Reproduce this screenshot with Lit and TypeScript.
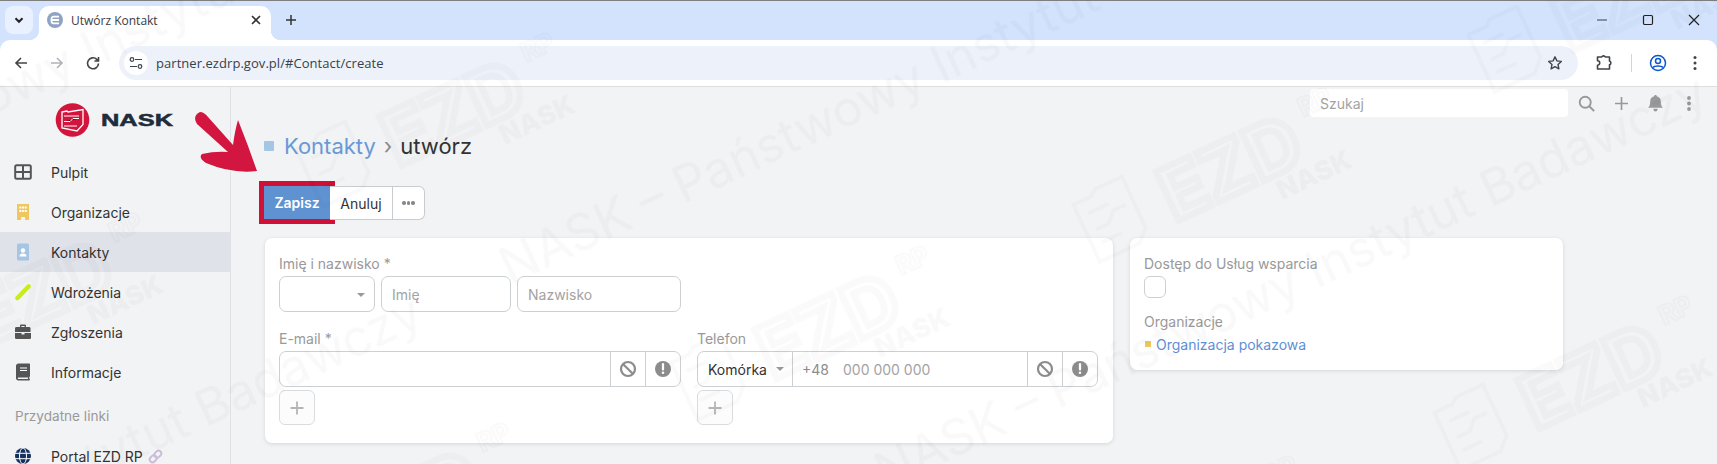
import { LitElement, html, css, svg } from "lit";
import { customElement } from "lit/decorators.js";

const WM_TEXTS = [
  { x: 510, y: 285 },
  { x: 885, y: 490 },
  { x: -340, y: 270 },
  { x: -400, y: 710 },
];
const WM_LOGOS = [
  { x: 41, y: 292 },
  { x: 453, y: 112 },
  { x: 828, y: 325 },
  { x: 1230, y: 167 },
  { x: 1591, y: 375 },
  { x: 1625, y: -3 },
  { x: 409, y: 502 },
  { x: 1196, y: 535 },
];

const icons = {
  grid: svg`<svg viewBox="0 0 18 18" width="18" height="18"><rect x="1.200" y="2.200" width="15.600" height="13.600" rx="1.500" fill="none" stroke="#555" stroke-width="2"/><path d="M9 2v14M1 9h16" stroke="#555" stroke-width="2"/></svg>`,
  building: svg`<svg viewBox="0 0 18 18" width="18" height="18"><path d="M3 1h12v16h-4v-3H7v3H3z" fill="#f0c75e"/><g fill="#fff"><rect x="5.300" y="3.500" width="2" height="2"/><rect x="8" y="3.500" width="2" height="2"/><rect x="10.700" y="3.500" width="2" height="2"/><rect x="5.300" y="7" width="2" height="2"/><rect x="8" y="7" width="2" height="2"/><rect x="10.700" y="7" width="2" height="2"/></g></svg>`,
  contact: svg`<svg viewBox="0 0 18 18" width="18" height="18"><rect x="3" y="0.500" width="12" height="17" rx="1.500" fill="#a4c6e4"/><circle cx="9" cy="7.500" r="2.200" fill="#fff"/><path d="M5.500 13.500c0-2.200 1.500-3 3.500-3s3.500.8 3.500 3z" fill="#fff"/></svg>`,
  pencil: svg`<svg viewBox="0 0 18 18" width="18" height="18"><path d="M3.500 15L14.500 3.500" stroke="#c6ee1a" stroke-width="4.500" stroke-linecap="round"/></svg>`,
  case: svg`<svg viewBox="0 0 18 18" width="18" height="18"><path d="M6 4V2.800C6 2 6.600 1.500 7.300 1.500h3.400c.7 0 1.300.5 1.300 1.300V4h3c1 0 1.500.6 1.500 1.500V9H1V5.500C1 4.600 1.500 4 2.500 4zm1.400 0h3.200V3H7.400z" fill="#555" fill-rule="evenodd"/><path d="M1 10h6.500v1.500h3V10H17v4.500c0 1-.6 1.500-1.500 1.500h-13C1.600 16 1 15.500 1 14.500z" fill="#555"/></svg>`,
  book: svg`<svg viewBox="0 0 18 18" width="18" height="18"><path d="M4.500.5H15c.6 0 1 .4 1 1V13c0 .4-.3.800-.7.900v1.900c.4.100.7.400.7.700 0 .5-.4.900-.9.900H4.500C3 17.500 2 16.500 2 15V3C2 1.500 3 .5 4.500.5zm.2 13.900c-.5 0-1 .3-1 .8s.5.800 1 .8H14v-1.600z" fill="#555" fill-rule="evenodd"/><path d="M6 5h7M6 7.500h7" stroke="#fff" stroke-width="1.200"/></svg>`,
  globe: svg`<svg viewBox="0 0 18 18" width="18" height="18"><circle cx="9" cy="9" r="8" fill="#14305e"/><ellipse cx="9" cy="9" rx="3.500" ry="8" fill="none" stroke="#fff" stroke-width="1"/><path d="M1 6.300h16M1 11.700h16" stroke="#fff" stroke-width="1"/></svg>`,
  link: svg`<svg viewBox="0 0 16 16" width="15" height="15"><g fill="none" stroke="#c9bcd6" stroke-width="2" transform="rotate(-45 8 8)"><rect x="0.500" y="5" width="8" height="6" rx="3"/><rect x="7.500" y="5" width="8" height="6" rx="3"/></g></svg>`,
  ban: svg`<svg viewBox="0 0 18 18" width="18" height="18"><circle cx="9" cy="9" r="7" fill="none" stroke="#8c8c8c" stroke-width="2.200"/><path d="M4.200 4.200l9.600 9.600" stroke="#8c8c8c" stroke-width="2.200"/></svg>`,
  warn: svg`<svg viewBox="0 0 18 18" width="18" height="18"><circle cx="9" cy="9" r="8" fill="#8c8c8c"/><path d="M9 4.200v5.300" stroke="#fff" stroke-width="2.200" stroke-linecap="round"/><circle cx="9" cy="12.800" r="1.300" fill="#fff"/></svg>`,
  plus: svg`<svg viewBox="0 0 14 14" width="14" height="14"><path d="M7 .5v13M.5 7h13" stroke="#b5b5b5" stroke-width="1.800"/></svg>`,
};

@customElement("app-root")
export class AppRoot extends LitElement {
  static styles = css`
    :host { display: block; position: relative; width: 1717px; height: 464px; overflow: hidden; background: #f2f3f5; font-family: Inter, "Noto Sans", sans-serif; font-size: 14px; color: #333; }
    * { box-sizing: border-box; }
    svg { display: block; }

    .browser { height: 87px; background: #d3e3fd; border-top: 1px solid #7f7f7f; display: flex; flex-direction: column; font-family: "Open Sans", sans-serif; }
    .strip { height: 39px; display: flex; align-items: flex-start; padding: 5px 0 0 5px; }
    .tab-list { width: 28px; height: 28px; border-radius: 8px; background: #e9f1fe; display: flex; align-items: center; justify-content: center; }
    .tab { position: relative; margin-left: 6px; width: 232px; height: 34px; background: #fff; border-radius: 10px 10px 0 0; display: flex; align-items: center; padding: 0 9px 6px 8px; font-size: 12px; color: #3c3c3c; }
    .tab::before, .tab::after { content: ""; position: absolute; bottom: 0; width: 10px; height: 10px; }
    .tab::before { left: -10px; background: radial-gradient(circle at 0 0, transparent 10px, #fff 10.500px); }
    .tab::after { right: -10px; background: radial-gradient(circle at 100% 0, transparent 10px, #fff 10.500px); }
    .tab-title { margin-left: 8px; flex: 1; }
    .new-tab { margin: 8px 0 0 14px; }
    .winctl { margin-left: auto; display: flex; gap: 30px; padding: 6px 15px 0 0; }
    .winctl svg { width: 16px; height: 16px; }
    .toolbar { flex: 1; background: #fff; border-radius: 10px 10px 0 0; border-bottom: 1px solid #dcdee0; display: flex; align-items: center; padding: 0 14px 0 12px; }
    .nav { display: flex; gap: 18px; margin-right: 17px; }
    .omni { width: 1459px; height: 34px; border-radius: 17px; background: #edf2fa; display: flex; align-items: center; padding: 0 15px 0 5px; font-size: 13px; color: #37414e; }
    .chip { width: 24px; height: 24px; border-radius: 50%; background: #fff; display: flex; align-items: center; justify-content: center; margin-right: 8px; }
    .url { flex: 1; letter-spacing: .05px; }
    .tools { display: flex; align-items: center; margin-left: 17px; }
    .divider { width: 1px; height: 18px; background: #c4d7f5; margin: 0 17px 0 18px; }
    .dots { margin-left: 26px; }

    .page { display: flex; height: 377px; }
    .side { width: 231px; flex: none; border-right: 1px solid #dfe1e4; }
    .logo { height: 65px; display: flex; align-items: flex-start; padding: 16px 0 0 55px; }
    .item { height: 40px; display: flex; align-items: center; padding-left: 14px; gap: 19px; color: #333; }
    .item.active { background: #dfe2e9; }
    .ico { width: 18px; flex: none; }
    .side-label { height: 40px; margin-top: 4px; display: flex; align-items: center; padding-left: 15px; color: #999; font-size: 13.600px; }
    .ext { margin-left: -14px; }

    main { flex: 1; padding: 0 0 0 34px; min-width: 0; }
    .top { height: 32px; display: flex; align-items: center; justify-content: flex-end; padding-right: 26px; }
    .search { width: 258px; height: 28px; background: #fff; border: 0; border-radius: 4px; padding: 0 10px; font: 14px Inter, sans-serif; color: #333; outline: none; }
    .search::placeholder, .field::placeholder { color: #a3a3a3; opacity: 1; }
    .top-icons { display: flex; align-items: center; gap: 20px; margin-left: 10px; }
    .top-dots { margin-left: 4px; }
    .title { margin: 12px 0 0 -1px; height: 30px; display: flex; align-items: center; font-size: 22px; }
    .sq { width: 10px; height: 10px; background: #a4c6e4; margin-right: 10px; border-radius: 1px; }
    .title a { color: #6a9ad6; }
    .sep { color: #8a8a8a; margin: 0 8px; }
    .actions { display: flex; align-items: flex-start; margin: 25px 0 0 -1px; height: 34px; }
    .btn { height: 34px; background: #fff; border: 1px solid #c9cccf; border-left: 0; display: flex; align-items: center; justify-content: center; color: #333; }
    .save { width: 66px; height: 33px; border: 0; background: #5f92d1; color: #fff; font-weight: 600; outline: 5px solid #cf1037; }
    .cancel { width: 63px; }
    .more { width: 32px; border-radius: 0 6px 6px 0; gap: 1.200px; }
    .more i { width: 3.500px; height: 3.500px; border-radius: 50%; background: #888; }

    .cards { display: flex; gap: 17px; align-items: flex-start; margin-top: 18px; }
    .card { background: #fff; border-radius: 7px; box-shadow: 0 1px 4px rgba(0,0,0,.12); padding: 15px 14px 18px; }
    .c1 { width: 848px; height: 205px; }
    .c2 { width: 433px; height: 132px; }
    .label { height: 20px; line-height: 22px; color: #999; margin-bottom: 3px; }
    .row { display: flex; gap: 6px; height: 36px; }
    .grid { display: grid; grid-template-columns: 402px 401px; column-gap: 16px; margin-top: 16px; }
    .box { height: 36px; border: 1px solid #ccd0d2; border-radius: 7px; background: #fff; position: relative; }
    .select { width: 96px; }
    .caret { width: 0; height: 0; border: 4px solid transparent; border-top: 4.500px solid #999; border-bottom: 0; }
    .select .caret { position: absolute; right: 9px; top: 16px; }
    .field { height: 36px; border: 1px solid #ccd0d2; border-radius: 7px; padding: 0 10px; font: 14px Inter, sans-serif; color: #333; outline: none; background: #fff; }
    .imie { width: 130px; }
    .nazw { width: 164px; }
    .group { display: flex; align-items: stretch; }
    .grow { flex: 1; min-width: 0; }
    .cell { width: 35px; border-left: 1px solid #ccd0d2; display: flex; align-items: center; justify-content: center; }
    .type { width: 95px; padding-left: 10px; display: flex; align-items: center; gap: 9px; color: #333; border-right: 1px solid #ccd0d2; }
    .phone { flex: 1; display: flex; align-items: center; padding-left: 9px; color: #a3a3a3; }
    .phone .pre { color: #8c8c8c; margin-right: 14px; }
    .add { width: 36px; height: 35px; margin-top: 3px; border: 1px solid #d9dcde; border-radius: 6px; background: #fcfcfc; display: flex; align-items: center; justify-content: center; }
    .check { width: 22px; height: 22px; border: 1px solid #ccd0d2; border-radius: 6px; margin-bottom: 13px; }
    .org { display: flex; align-items: center; color: #5f8fd4; height: 20px; margin-top: 2px; }
    .org i { width: 6px; height: 6px; background: #f0c75e; margin: 0 5px 0 1px; }

    .overlay { position: absolute; left: 0; top: 0; pointer-events: none; }
    .wm { filter: blur(.7px); }
    .wm-text { font: 50px Inter, sans-serif; fill: rgba(0,0,0,.022); stroke: rgba(0,0,0,.01); stroke-width: 1px; }
    .wm-ezd { font: 700 74px Inter, sans-serif; fill: none; stroke: rgba(0,0,0,.018); stroke-width: 7px; }
    .wm-rp { font: 700 26px Inter, sans-serif; fill: none; stroke: rgba(0,0,0,.018); stroke-width: 2.500px; }
    .wm-nask { font: 900 27px Inter, sans-serif; fill: rgba(0,0,0,.025); }
    .wm-doc { fill: none; stroke: rgba(0,0,0,.018); stroke-width: 4px; }
    .nask-word { font: 900 16px "Liberation Sans", sans-serif; fill: #1f2d3a; stroke: #1f2d3a; stroke-width: .5px; }
  `;

  private renderWatermark() {
    return svg`<g class="wm">
      ${WM_TEXTS.map((t) => svg`<text class="wm-text" transform="translate(${t.x} ${t.y}) rotate(-25)">NASK – Państwowy Instytut Badawczy</text>`)}
      ${WM_LOGOS.map((l) => svg`<g transform="translate(${l.x} ${l.y}) rotate(-25)">
        <text class="wm-ezd" text-anchor="middle" y="27">EZD</text>
        <text class="wm-rp" text-anchor="middle" x="104" y="-14">RP</text>
        <text class="wm-nask" text-anchor="middle" x="73" y="52">NASK</text>
        <path class="wm-doc" d="M-158 -32h20l6 -5h30v56l-12 12h-44zM-148 -18h22M-148 0h14l10 -10h14M-148 14h22"/>
      </g>`)}
    </g>`;
  }

  render() {
    const nav = [
      ["Pulpit", icons.grid],
      ["Organizacje", icons.building],
      ["Kontakty", icons.contact, true],
      ["Wdrożenia", icons.pencil],
      ["Zgłoszenia", icons.case],
      ["Informacje", icons.book],
    ] as const;
    return html`
      <div class="browser">
        <div class="strip">
          <div class="tab-list"><svg width="12" height="12" viewBox="0 0 12 12"><path d="M2.500 4.300L6 7.800l3.500-3.500" fill="none" stroke="#222" stroke-width="2"/></svg></div>
          <div class="tab">
            <svg width="16" height="16" viewBox="0 0 16 16"><circle cx="8" cy="8" r="8" fill="#8fa4c4"/><path d="M12 4.700H6.500a2 2 0 0 0-2 2v2.600a2 2 0 0 0 2 2H12M5 8h7" fill="none" stroke="#fff" stroke-width="1.800"/></svg>
            <span class="tab-title">Utwórz Kontakt</span>
            <svg width="12" height="12" viewBox="0 0 12 12"><path d="M2 2l8 8M10 2l-8 8" stroke="#333" stroke-width="1.600"/></svg>
          </div>
          <svg class="new-tab" width="12" height="12" viewBox="0 0 12 12"><path d="M6 1v10M1 6h10" stroke="#333" stroke-width="1.500"/></svg>
          <div class="winctl">
            <svg viewBox="0 0 16 16"><path d="M3 8h10" stroke="#6f7380" stroke-width="1.500"/></svg>
            <svg viewBox="0 0 16 16"><rect x="3.500" y="3.500" width="9" height="9" rx="1.200" fill="none" stroke="#222" stroke-width="1.200"/></svg>
            <svg viewBox="0 0 16 16"><path d="M3 3l10 10M13 3L3 13" stroke="#222" stroke-width="1.200"/></svg>
          </div>
        </div>
        <div class="toolbar">
          <div class="nav">
            <svg width="18" height="18" viewBox="0 0 18 18"><path d="M15 9H4M9 4L4 9l5 5" fill="none" stroke="#444" stroke-width="1.600"/></svg>
            <svg width="18" height="18" viewBox="0 0 18 18"><path d="M3 9h11M9 4l5 5-5 5" fill="none" stroke="#b0b2b6" stroke-width="1.600"/></svg>
            <svg width="18" height="18" viewBox="0 0 18 18"><path d="M14.500 9.500a5.500 5.500 0 1 1-1.700-4.200L14.500 7M14.500 3v4h-4" fill="none" stroke="#444" stroke-width="1.600"/></svg>
          </div>
          <div class="omni">
            <div class="chip"><svg width="14" height="14" viewBox="0 0 14 14"><g fill="none" stroke="#3c4450" stroke-width="1.200"><circle cx="3" cy="3.500" r="1.800"/><path d="M6 3.500h7M1 10.500h7"/><circle cx="11" cy="10.500" r="1.800"/></g></svg></div>
            <span class="url">partner.ezdrp.gov.pl/#Contact/create</span>
            <svg width="16" height="16" viewBox="0 0 16 16"><path d="M8 1.800l1.900 4.100 4.400.5-3.300 3 .9 4.400L8 11.600l-3.900 2.200.9-4.400-3.300-3 4.400-.5z" fill="none" stroke="#3f444b" stroke-width="1.400" stroke-linejoin="round"/></svg>
          </div>
          <div class="tools">
            <svg width="18" height="18" viewBox="0 0 18 18"><path d="M2.500 3h4.200a2 2 0 0 1 3.600 0h4.200v4a2 2 0 0 1 0 3.800V15H2.500v-3.800a2 2 0 0 0 0-4.500z" fill="none" stroke="#3f444b" stroke-width="1.600" stroke-linejoin="round"/></svg>
            <div class="divider"></div>
            <svg width="18" height="18" viewBox="0 0 18 18"><circle cx="9" cy="9" r="7.500" fill="none" stroke="#0b57d0" stroke-width="1.500"/><circle cx="9" cy="7" r="2.500" fill="none" stroke="#0b57d0" stroke-width="1.500"/><path d="M4 13.500c1.500-2 8.500-2 10 0" fill="none" stroke="#0b57d0" stroke-width="1.500"/></svg>
            <svg class="dots" width="4" height="16" viewBox="0 0 4 16"><g fill="#444"><circle cx="2" cy="2.500" r="1.500"/><circle cx="2" cy="8" r="1.500"/><circle cx="2" cy="13.500" r="1.500"/></g></svg>
          </div>
        </div>
      </div>

      <div class="page">
        <nav class="side">
          <div class="logo">
            <svg width="120" height="36" viewBox="0 0 120 36">
              <circle cx="17.500" cy="17" r="16.800" fill="#d3143c"/>
              <path d="M7 9l5-1 1 1 15-2.500v15l-6 6.500-15-3z" fill="none" stroke="#fff" stroke-width="1.300"/>
              <path d="M9 13h15M9 18.500h6l3-3h6M9 23h13" stroke="#fff" stroke-width="1"/>
              <text class="nask-word" x="46" y="23" textLength="72" lengthAdjust="spacingAndGlyphs">NASK</text>
            </svg>
          </div>
          ${nav.map(
            ([name, icon, active]) => html`<div class="item ${active ? "active" : ""}"><span class="ico">${icon}</span>${name}</div>`
          )}
          <div class="side-label">Przydatne linki</div>
          <div class="item"><span class="ico">${icons.globe}</span>Portal EZD RP<span class="ext">${icons.link}</span></div>
        </nav>
        <main>
          <div class="top">
            <input class="search" placeholder="Szukaj" />
            <div class="top-icons">
              <svg width="17" height="17" viewBox="0 0 20 20"><circle cx="8.500" cy="8.500" r="6.500" fill="none" stroke="#999" stroke-width="2.200"/><path d="M13 13l6 6" stroke="#999" stroke-width="2.400"/></svg>
              <svg width="13" height="13" viewBox="0 0 14 14"><path d="M7 0v14M0 7h14" stroke="#999" stroke-width="1.800"/></svg>
              <svg width="15" height="17" viewBox="0 0 14 16"><path d="M7 0c.7 0 1.200.5 1.200 1.100C10.500 1.600 12 3.500 12 6c0 3 .6 4.500 2 6H0c1.400-1.500 2-3 2-6 0-2.500 1.500-4.400 3.800-4.900C5.800.5 6.300 0 7 0zM5 13h4c0 1.500-.8 2.500-2 2.500S5 14.500 5 13z" fill="#999"/></svg>
              <svg class="top-dots" width="4" height="15" viewBox="0 0 4 15"><g fill="#999"><circle cx="2" cy="2" r="1.900"/><circle cx="2" cy="7.500" r="1.900"/><circle cx="2" cy="13" r="1.900"/></g></svg>
            </div>
          </div>
          <div class="title"><span class="sq"></span><a>Kontakty</a><span class="sep">›</span><span>utwórz</span></div>
          <div class="actions">
            <div class="btn save">Zapisz</div>
            <div class="btn cancel">Anuluj</div>
            <div class="btn more"><i></i><i></i><i></i></div>
          </div>
          <div class="cards">
            <section class="card c1">
              <div class="label">Imię i nazwisko *</div>
              <div class="row">
                <div class="box select"><span class="caret"></span></div>
                <input class="field imie" placeholder="Imię" />
                <input class="field nazw" placeholder="Nazwisko" />
              </div>
              <div class="grid">
                <div>
                  <div class="label">E-mail *</div>
                  <div class="box group">
                    <div class="grow"></div>
                    <div class="cell">${icons.ban}</div>
                    <div class="cell">${icons.warn}</div>
                  </div>
                  <div class="add">${icons.plus}</div>
                </div>
                <div>
                  <div class="label">Telefon</div>
                  <div class="box group">
                    <div class="type">Komórka<span class="caret"></span></div>
                    <div class="phone"><span class="pre">+48</span>000 000 000</div>
                    <div class="cell">${icons.ban}</div>
                    <div class="cell">${icons.warn}</div>
                  </div>
                  <div class="add">${icons.plus}</div>
                </div>
              </div>
            </section>
            <section class="card c2">
              <div class="label">Dostęp do Usług wsparcia</div>
              <div class="check"></div>
              <div class="label">Organizacje</div>
              <div class="org"><i></i>Organizacja pokazowa</div>
            </section>
          </div>
        </main>
      </div>

      <svg class="overlay" width="1717" height="464" viewBox="0 0 1717 464">
        ${this.renderWatermark()}
        <path d="M200 112Q204 112 208 117L233 145Q235 130 238 120Q248 145 257 171Q232 174 206 163Q198 158 202 154Q215 151 228 152L197 124Q192 116 200 112Z" fill="#d3163f"/>
      </svg>
    `;
  }
}
